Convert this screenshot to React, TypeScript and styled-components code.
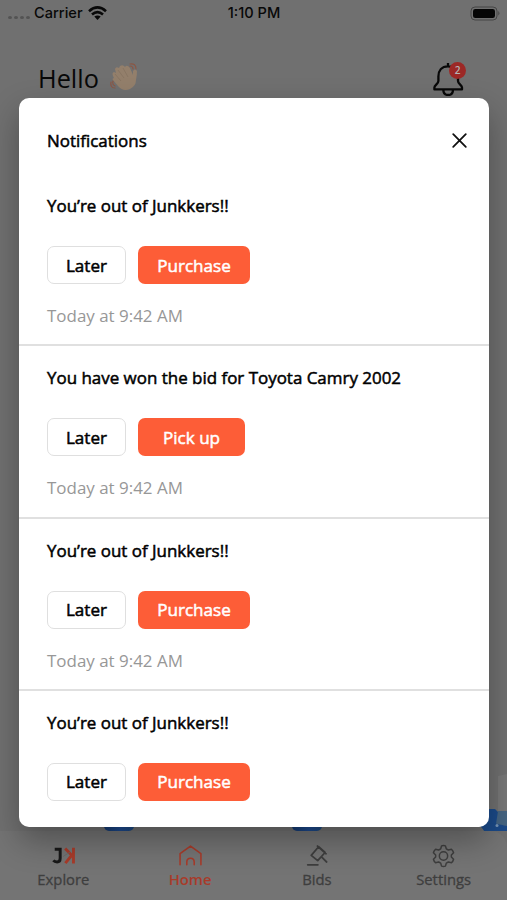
import React from "react";
import styled, { createGlobalStyle } from "styled-components";

const GlobalStyle = createGlobalStyle`
  * { box-sizing: border-box; }
  body { margin: 0; overflow: hidden; font-family: "Open Sans", "Noto Sans", sans-serif; }
  button { font: inherit; padding: 0; cursor: pointer; }
`;

const Screen = styled.main`
  position: relative;
  display: flex;
  flex-direction: column;
  width: 507px;
  height: 900px;
  overflow: hidden;
  background: #707070;
  color: #080808;
`;

const StatusBar = styled.header`
  display: grid;
  grid-template-columns: 1fr auto 1fr;
  align-items: center;
  height: 26px;
  padding: 0 7px 0 8px;
  font: 500 14.6px/26px Inter, sans-serif;
`;

const Carrier = styled.div`
  display: flex;
  align-items: center;
  gap: 5px;
`;

const SignalDots = styled.span`
  display: flex;
  gap: 2px;
  margin-top: 9px;
  margin-right: -1px;
  i { width: 4px; height: 3px; border-radius: 50%; background: #535353; }
`;

const BatteryCell = styled.div`
  display: flex;
  justify-content: flex-end;
`;

const Greeting = styled.section`
  display: flex;
  align-items: center;
  justify-content: space-between;
  height: 40px;
  margin-top: 32px;
  padding: 0 41px 0 38px;
`;

const Hello = styled.h1`
  display: flex;
  align-items: center;
  gap: 11px;
  margin: 0;
  font-size: 25.3px;
  line-height: 40px;
  font-weight: 400;
`;

const Bell = styled.div`
  position: relative;
  display: flex;
  width: 36px;
  height: 36px;
`;

const Count = styled.span`
  position: absolute;
  top: 2px;
  right: 0;
  width: 17px;
  height: 17px;
  border-radius: 50%;
  background: #9c2826;
  color: #b5b5b5;
  font-size: 10px;
  font-weight: 600;
  line-height: 17px;
  text-align: center;
`;

const Content = styled.div`
  display: flex;
  flex: 1;
  flex-direction: column;
  justify-content: flex-end;
`;

const CarStrip = styled.div`
  display: grid;
  grid-template-columns: 104px 30px 158px 30px 159px 26px;
  align-items: end;
  height: 60px;
`;

const CarCorner = styled.i`
  height: 13px;
  border-radius: 0 0 5px 5px;
  background: linear-gradient(90deg, #153a6e, #1d4a90 55%, #1c487e);
`;

const TabBar = styled.nav`
  display: grid;
  grid-template-columns: repeat(4, 1fr);
  height: 69px;
  border-radius: 0 16px 0 0;
  background: #747474;
`;

const Tab = styled.a<{ $active?: boolean }>`
  display: flex;
  flex-direction: column;
  align-items: center;
  padding-top: 13px;
  color: ${({ $active }) => ($active ? "#a83b2a" : "#3e3e3e")};
  font-size: 14.8px;
  font-weight: ${({ $active }) => ($active ? 600 : 400)};
  line-height: 20px;
  -webkit-text-stroke: ${({ $active }) => ($active ? "0" : "0.3px")};
  svg { width: 25px; height: 24px; margin-bottom: 1px; }
`;

const Dialog = styled.section`
  position: absolute;
  top: 98px;
  left: 19px;
  width: 470px;
  height: 729px;
  overflow: hidden;
  border-radius: 10px;
  background: #fff;
  color: #000;
`;

const DialogShadow = styled.div`
  position: absolute;
  top: 98px;
  left: 19px;
  width: 470px;
  height: 729px;
  border-radius: 10px;
  box-shadow: 0 14px 32px rgba(0, 0, 0, 0.3);
`;

const DialogHeader = styled.header`
  display: flex;
  align-items: center;
  justify-content: space-between;
  height: 76px;
  padding: 9px 21px 0 28px;
`;

const Title = styled.h2`
  margin: 0;
  font-size: 16.95px;
  font-weight: 400;
  line-height: 24px;
  -webkit-text-stroke: 0.5px;
`;

const Close = styled.button`
  display: flex;
  border: 0;
  background: none;
`;

const Item = styled.article`
  display: flex;
  flex-direction: column;
  height: 172.3px;
  padding: 20px 28px 0;
  border-bottom: 2px solid #e0e0e0;
`;

const Message = styled(Title).attrs({ as: "h3" })``;

const Actions = styled.div`
  display: flex;
  gap: 12px;
  margin-top: 28px;
`;

const Action = styled.button<{ $width: number; $primary?: boolean }>`
  width: ${({ $width }) => $width}px;
  height: 38px;
  border: ${({ $primary }) => ($primary ? "0" : "1.5px solid #dfdfdf")};
  border-radius: 7px;
  background: ${({ $primary }) => ($primary ? "#fd5d37" : "#fff")};
  background-clip: padding-box;
  color: ${({ $primary }) => ($primary ? "#fff" : "#000")};
  font-size: 17.1px;
  -webkit-text-stroke: 0.5px;
`;

const Time = styled.time`
  margin-top: 20px;
  color: #979797;
  font-size: 16.95px;
  line-height: 24px;
`;

const notifications = [
  { message: "You’re out of Junkkers!!", action: "Purchase", width: 112 },
  { message: "You have won the bid for Toyota Camry 2002", action: "Pick up", width: 107 },
  { message: "You’re out of Junkkers!!", action: "Purchase", width: 112 },
  { message: "You’re out of Junkkers!!", action: "Purchase", width: 112 },
];

const WifiIcon = () => (
  <svg width="19" height="15" viewBox="0 0 19 15" fill="none" stroke="currentColor" strokeWidth="2.6">
    <path d="M1 5.2Q9.5-2.3 18 5.2M4 8.4Q9.5 3.7 15 8.4" />
    <path d="M6.3 10.6Q9.5 8.2 12.7 10.6L9.5 14Z" fill="currentColor" stroke="none" />
  </svg>
);

const BatteryIcon = () => (
  <svg width="30" height="15" viewBox="0 0 30 15">
    <rect x="1" y="1" width="26" height="13" rx="4" fill="none" stroke="#454545" />
    <rect x="3" y="3" width="22" height="9" rx="2.3" fill="#050505" />
    <path d="M28.3 5Q30.5 7.2 28.3 9.5Z" fill="#454545" />
  </svg>
);

const WaveIcon = () => (
  <svg width="29" height="30" viewBox="0 0 29 30">
    <g fill="none" stroke="#8b5745" strokeWidth="1.2" strokeLinecap="round">
      <path d="M20 3Q23 3 23 6M20 1Q26 0 26 6M3 18Q2 22 5 23M1 19Q0 25 5 25" />
    </g>
    <path d="M4 15Q1 10 4 9L6 10 5 6Q6 3 9 5L10 3Q13 1 15 4Q17 1 20 5L23 12 23 8Q25 5 27 8Q27 12 26 17Q26 23 20 26Q13 29 8 23L3 17Q2 15 4 15Z" fill="#937f6b" />
    <path d="M8 7L14 15M13 5L18 14M5 11L11 18" stroke="#887562" fill="none" />
  </svg>
);

const BellIcon = () => (
  <svg width="36" height="36" viewBox="0 0 36 36" fill="none" stroke="#080808" strokeWidth="2.3" strokeLinejoin="round">
    <path d="M18 6.3C11.5 6.3 8.4 11 8.4 16.5V21C8.4 24 4.4 25.2 4.4 27.5V29.4H32V27.5C32 25.2 28 24 28 21V16.5C28 11 24.5 6.3 18 6.3ZM13.3 29.4Q13.3 35 18.2 35Q23 35 23 29.4M18 3V7" />
  </svg>
);

const JunkkersIcon = () => (
  <svg viewBox="0 0 26 26" fill="none" strokeWidth="3.2">
    <path d="M3.5 5.6H9.4V15.5Q9.4 19.5 6 19.5Q3.4 19.5 2 17.8" stroke="#181818" />
    <path d="M23.8 4V21M14.8 4.8L22 12.2L15 20.8" stroke="#a83b2a" strokeWidth="3.1" />
    <path d="M12.5 13.6L20 8.8" stroke="#686868" strokeWidth="0.9" />
  </svg>
);

const HomeIcon = () => (
  <svg viewBox="0 0 26 26" fill="none" stroke="currentColor" strokeWidth="1.7" strokeLinecap="round" strokeLinejoin="round">
    <path d="M1.7 22.5V10.5L13 2.3L24.3 10.5V22.5M9 22.5V19.5Q9 15.4 13 15.4Q17 15.4 17 19.5V22.5" />
  </svg>
);

const GavelIcon = () => (
  <svg viewBox="0 0 26 26" fill="none" stroke="currentColor" strokeWidth="1.9" strokeLinejoin="round" strokeLinecap="round">
    <path d="M7.3 12.3L15.3 3L22.3 9.2L14.3 18ZM14 2.2L23.4 10.6M18.4 14L24 19.5M3.5 22.6H14.5" />
  </svg>
);

const SettingsIcon = () => (
  <svg viewBox="0 0 26 26" fill="none" stroke="currentColor" strokeWidth="1.6" strokeLinejoin="round">
    <path d="M10.9 2Q13 1.2 15.1 2L16 5.2L18.3 6.5L21.6 5.7Q23.4 7.2 23.9 9.5L21.5 12V14L23.9 16.5Q23.4 18.8 21.6 20.3L18.3 19.5L16 20.8L15.1 24Q13 24.8 10.9 24L10 20.8L7.7 19.5L4.4 20.3Q2.6 18.8 2.1 16.5L4.5 14V12L2.1 9.5Q2.6 7.2 4.4 5.7L7.7 6.5L10 5.2Z" />
    <circle cx="13" cy="13" r="4.5" />
  </svg>
);

export default function App() {
  return (
    <>
      <GlobalStyle />
      <Screen>
        <StatusBar>
          <Carrier>
            <SignalDots><i /><i /><i /><i /></SignalDots>
            <span>Carrier</span>
            <WifiIcon />
          </Carrier>
          <span>1:10 PM</span>
          <BatteryCell><BatteryIcon /></BatteryCell>
        </StatusBar>
        <Greeting>
          <Hello>Hello <WaveIcon /></Hello>
          <Bell><BellIcon /><Count>2</Count></Bell>
        </Greeting>
        <Content>
          <CarStrip>
            <span /><CarCorner /><span /><CarCorner /><span />
            <svg width="26" height="60" viewBox="0 0 26 60">
              <path d="M17 5L26 3V40H17Z" fill="#787878" />
              <path d="M0 38H14L17 41V60H4L0 56Z" fill="#1b4a89" />
              <path d="M17 40H26V55L15 53Z" fill="#466582" />
              <path d="M0 54L12 52L26 55V60H3Z" fill="#1b4a89" />
              <circle cx="16" cy="54.5" r="1.5" fill="#7895b5" />
            </svg>
          </CarStrip>
          <TabBar>
            <Tab><JunkkersIcon />Explore</Tab>
            <Tab $active><HomeIcon />Home</Tab>
            <Tab><GavelIcon />Bids</Tab>
            <Tab><SettingsIcon />Settings</Tab>
          </TabBar>
        </Content>
        <DialogShadow />
        <Dialog role="dialog">
          <DialogHeader>
            <Title>Notifications</Title>
            <Close aria-label="Close">
              <svg width="17" height="17" viewBox="0 0 17 17" fill="none" stroke="#111" strokeWidth="1.8" strokeLinecap="round">
                <path d="M2.2 2.2L14.8 14.8M14.8 2.2L2.2 14.8" />
              </svg>
            </Close>
          </DialogHeader>
          {notifications.map((item, index) => (
            <Item key={index}>
              <Message>{item.message}</Message>
              <Actions>
                <Action $width={79}>Later</Action>
                <Action $width={item.width} $primary>{item.action}</Action>
              </Actions>
              {index < 3 && <Time>Today at 9:42 AM</Time>}
            </Item>
          ))}
        </Dialog>
      </Screen>
    </>
  );
}
